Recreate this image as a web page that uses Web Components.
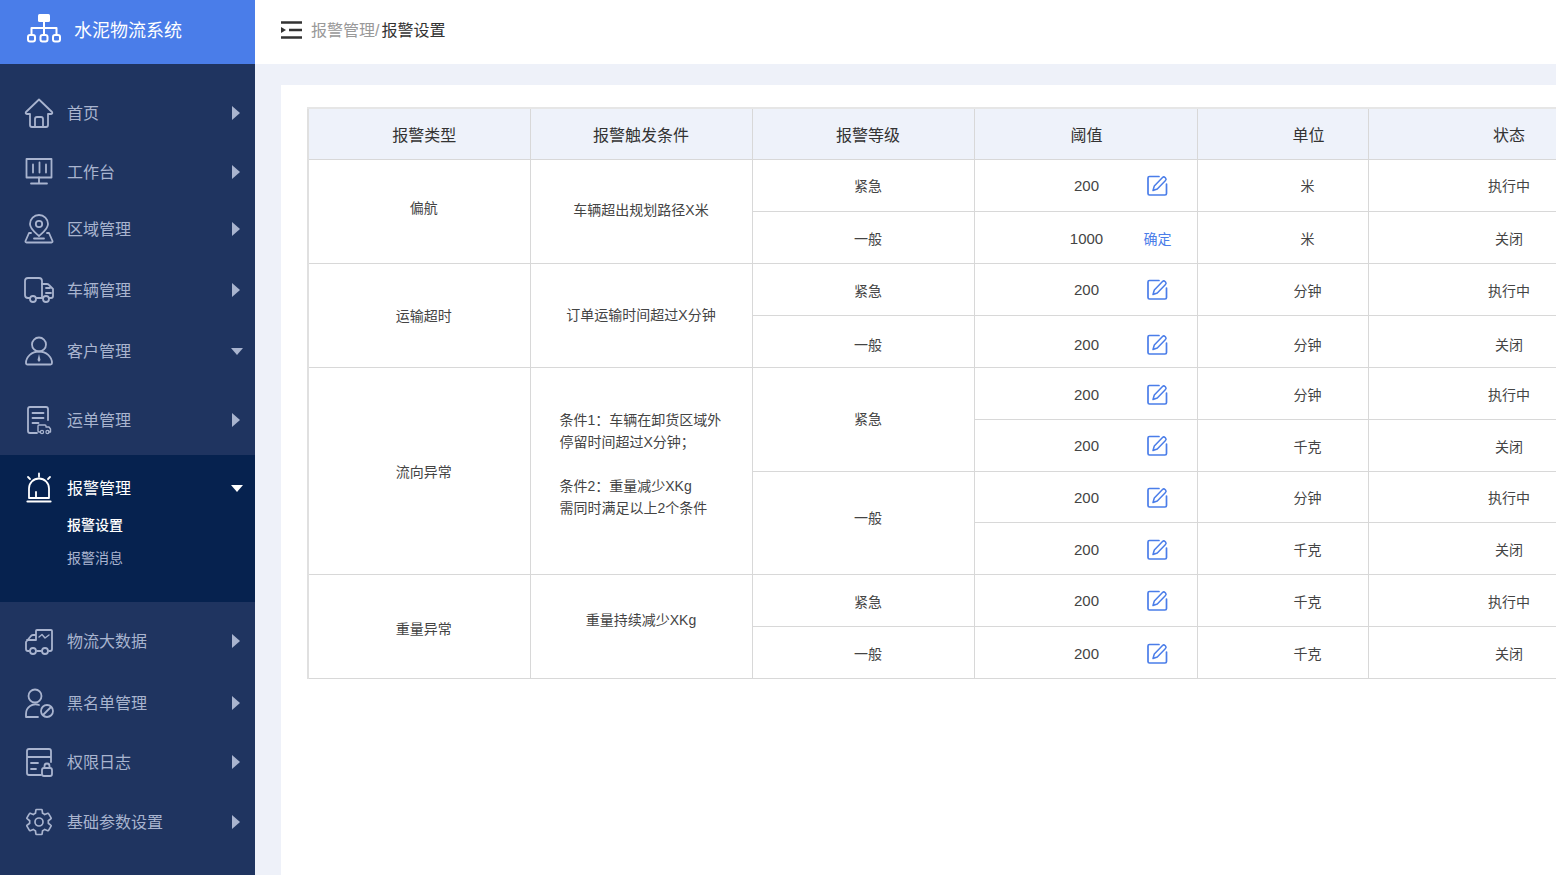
<!DOCTYPE html>
<html lang="zh">
<head>
<meta charset="utf-8">
<title>报警设置</title>
<style>
    html, body {
        margin: 0;
        height: 100%;
        overflow: hidden;
        font-family: "Liberation Sans", "Noto Sans CJK SC", sans-serif;
    }
</style>
</head>
<body>
<app-shell>
    <side-bar slot="side" title-text="水泥物流系统">
        <side-item icon="home" label="首页" h="58" top="20"></side-item>
        <side-item icon="monitor" label="工作台" h="60"></side-item>
        <side-item icon="pin" label="区域管理" h="54"></side-item>
        <side-item icon="truck" label="车辆管理" h="68"></side-item>
        <side-item icon="customer" label="客户管理" h="54" open></side-item>
        <side-item icon="waybill" label="运单管理" h="70" top="7"></side-item>
        <side-item icon="alarm" label="报警管理" h="66" open active>
            <sub-item active>报警设置</sub-item>
            <sub-item>报警消息</sub-item>
        </side-item>
        <side-item icon="data" label="物流大数据" h="78"></side-item>
        <side-item icon="black" label="黑名单管理" h="46"></side-item>
        <side-item icon="log" label="权限日志" h="72"></side-item>
        <side-item icon="gear" label="基础参数设置" h="48"></side-item>
    </side-bar>
    <top-bar slot="top" parent="报警管理" current="报警设置"></top-bar>
    <alarm-table></alarm-table>
</app-shell>

<script>
    const ICONS = {
        logo: '<rect x="11" y="0" width="12" height="8" rx="1.5" fill="currentColor" stroke="none"/><path d="M17 8v6M4.5 20v-6h25v6M17 14v6" stroke-width="2"/><rect x="1" y="21" width="7" height="6.5" rx="2" stroke-width="2"/><rect x="13.5" y="21" width="7" height="6.5" rx="2" stroke-width="2"/><rect x="26" y="21" width="7" height="6.5" rx="2" stroke-width="2"/>',
        home: '<path d="M15 1.5 2 14q-1 1.6 1 2h3v11q0 2 2 2h14q2 0 2-2V16h3q2-.4 1-2Z"/><path d="M11 29v-8q0-2 2-2h4q2 0 2 2v8"/>',
        monitor: '<rect x="2.500" y="2" width="25" height="18.500"/><path d="M9 7.500v8M15.500 5.500v10M22 7.500v8M15 20.500v5M7 26.500h16"/>',
        pin: '<path d="M15 1a9 9 0 0 1 9 9c0 5-5 8.500-9 12-4-3.500-9-7-9-12a9 9 0 0 1 9-9Z"/><circle cx="15" cy="10" r="3.200"/><path d="M7 19H5L1.500 27q-.3 1.500 1 1.500h25q1.300 0 1-1.500L25 19h-2M10 24.500h10"/>',
        truck: '<path d="M6 23H4q-3 0-3-3V6q0-3 3-3h11q3 0 3 3v17h-6"/><path d="M18 9h5q1.500 0 2.500 1.500L29 14v7q0 2-2 2h-2M18 23h1"/><circle cx="9" cy="24" r="3"/><circle cx="22" cy="24" r="3"/><path d="M22 13h4M22 18h5"/>',
        customer: '<circle cx="15" cy="8.500" r="7"/><path d="M2 27a13 11.500 0 0 1 26 0q0 1.500-1.500 1.500h-23Q2 28.500 2 27Z"/><path d="m15 18-1.500 6 1.500 2 1.500-2Z" fill="currentColor" stroke="none"/>',
        waybill: '<path d="M24 15V4q0-2-2-2H6Q4 2 4 4v22q0 2 2 2h7"/><path d="M8.500 8h11M8.500 13h11M8.500 18h6"/><g transform="translate(-2 -1)"><path d="M18 28h-1q-1 0-1-1v-5q0-1 1-1h6q1 0 1 1v1h3l1.500 2v3h-2" stroke-width="1.400"/><circle cx="20" cy="28" r="1.600" stroke-width="1.200"/><circle cx="25.500" cy="28" r="1.600" stroke-width="1.200"/></g>',
        alarm: '<path d="M5 25V15.500a10 10 0 0 1 20 0V25ZM12 25v-6M15 .5v3M4 4l2 2M26 4l-2 2"/><path d="M3.500 28.500h23" stroke-width="2.200"/>',
        data: '<path d="M12 9H9Q7.500 9 6.500 10.500L2 16v7q0 2 2 2h1M13 25h4M25 25h1q2 0 2-2V5q0-1-1-1H13q-1 0-1 1v9H3"/><path d="m15 11 3-2.500 3 3.500 4-3" stroke-width="1.400"/><circle cx="9" cy="25" r="3"/><circle cx="21" cy="25" r="3"/>',
        black: '<circle cx="11" cy="8" r="6.500"/><path d="M2 29v-3a9.500 9.500 0 0 1 13-9M2 29h12"/><circle cx="23" cy="23" r="6"/><path d="m19 27 8-8"/>',
        log: '<path d="M27 15V4q0-2-2-2H5Q3 2 3 4v22q0 2 2 2h12M3 10h24M7 16h7M7 22h5"/><rect x="18" y="21" width="10" height="8" rx="2"/><path d="M20.500 21v-2a2.500 2.500 0 0 1 5 0v2"/>',
        gear: '<g transform="scale(1.25)" stroke-width="1.350"><path d="M19.430 12.980c.04-.32.07-.64.07-.98s-.03-.66-.07-.98l2.110-1.650c.19-.15.24-.42.12-.64l-2-3.460c-.12-.22-.39-.3-.61-.22l-2.490 1c-.52-.4-1.080-.73-1.690-.98l-.38-2.650C14.460 2.180 14.250 2 14 2h-4c-.25 0-.46.18-.49.42l-.38 2.650c-.61.25-1.170.59-1.690.98l-2.490-1c-.23-.09-.49 0-.61.22l-2 3.460c-.13.22-.07.49.12.64l2.110 1.650c-.04.32-.07.65-.07.98s.03.66.07.98l-2.110 1.650c-.19.15-.24.42-.12.64l2 3.460c.12.22.39.3.61.22l2.490-1c.52.4 1.080.73 1.690.98l.38 2.650c.03.24.24.42.49.42h4c.25 0 .46-.18.49-.42l.38-2.650c.61-.25 1.170-.59 1.690-.98l2.490 1c.23.09.49 0 .61-.22l2-3.460c.12-.22.07-.49-.12-.64l-2.110-1.650z"/><circle cx="12" cy="12" r="3.200"/></g>',
        edit: '<path d="M12 1.500H2.500Q1 1.500 1 3v15.500Q1 20 2.500 20H18q1.500 0 1.500-1.500V9" stroke-width="1.700"/><path d="m6 15.500 1.300-4.500 8.200-8.500q1.300-1.200 2.500 0l.5.500q1.200 1.300 0 2.500l-8.200 8.500Z" stroke-width="1.500"/>',
        menu: '<path d="M0 1.500h21M8 9h13M0 16.500h21" stroke-width="2.400" stroke-linecap="butt"/><path d="M0 6l5 3-5 3Z" fill="currentColor" stroke="none"/>'
    };

    customElements.define('ui-icon', class extends HTMLElement {
        connectedCallback() {
            const size = this.getAttribute('size') || 30;
            const box = this.getAttribute('box') || '0 0 30 30';
            const sw = this.getAttribute('sw') || 1.8;
            this.attachShadow({ mode: 'open' }).innerHTML = `
                <style>:host { display: block; width: ${size}px; height: ${size}px; } svg { display: block; overflow: visible; }</style>
                <svg width="${size}" height="${size}" viewBox="${box}" fill="none" stroke="currentColor" stroke-width="${sw}" stroke-linecap="round" stroke-linejoin="round">${ICONS[this.getAttribute('name')]}</svg>`;
        }
    });

    customElements.define('app-shell', class extends HTMLElement {
        constructor() {
            super();
            this.attachShadow({ mode: 'open' }).innerHTML = `
                <style>
                    :host { display: grid; grid-template-columns: 255px 1fr; height: 875px; width: 1556px; overflow: hidden; background: #eef1f9; }
                    .right { display: flex; flex-direction: column; min-width: 0; overflow: hidden; }
                    .card { flex: 1; margin: 21px 0 0 26px; padding: 22px 0 0 26px; background: #fff; overflow: hidden; }
                </style>
                <slot name="side"></slot>
                <div class="right">
                    <slot name="top"></slot>
                    <div class="card"><slot></slot></div>
                </div>`;
        }
    });

    customElements.define('side-bar', class extends HTMLElement {
        connectedCallback() {
            this.attachShadow({ mode: 'open' }).innerHTML = `
                <style>
                    :host { display: flex; flex-direction: column; background: #1f3460; height: 875px; overflow: hidden; }
                    .brand { height: 58px; padding-bottom: 6px; flex: none; display: flex; align-items: center; gap: 13px; padding-left: 27px; background: #4a7de9; color: #fff; font-size: 18px; }
                    ui-icon { margin-top: 4px; }
                </style>
                <div class="brand"><ui-icon name="logo" size="34" box="0 0 34 34" sw="2"></ui-icon><span>${this.getAttribute('title-text')}</span></div>
                <slot></slot>`;
        }
    });

    customElements.define('side-item', class extends HTMLElement {
        connectedCallback() {
            const open = this.hasAttribute('open');
            this.attachShadow({ mode: 'open' }).innerHTML = `
                <style>
                    :host { display: block; flex: none; color: #a9b4cf; font-size: 16px; margin-top: ${this.getAttribute('top') || 0}px; }
                    :host([active]) { color: #fff; background: #06224f; height: 147px; }
                    :host([active]) .subs { margin-top: -12px; }
                    .row { height: ${this.getAttribute('h')}px; display: flex; align-items: center; padding: 0 12px 0 24px; }
                    .row span { margin-left: 13px; flex: 1; padding-bottom: 2px; }
                    .arrow { width: 0; height: 0; border-style: solid; border-color: transparent; margin-right: 3px; border-width: 7px 0 7px 8px; border-left-color: currentColor; }
                    .arrow.open { margin-right: 0; border-width: 7px 6.500px 0; border-color: currentColor transparent transparent; }
                </style>
                <div class="row">
                    <ui-icon name="${this.getAttribute('icon')}"></ui-icon>
                    <span>${this.getAttribute('label')}</span>
                    <i class="arrow${open ? ' open' : ''}"></i>
                </div>
                <div class="subs"><slot></slot></div>`;
        }
    });

    customElements.define('sub-item', class extends HTMLElement {
        constructor() {
            super();
            this.attachShadow({ mode: 'open' }).innerHTML = `
                <style>
                    :host { display: block; height: 33px; line-height: 33px; padding-left: 67px; font-size: 14px; color: #a9b4cf; }
                    :host([active]) { color: #fff; font-weight: 500; }
                </style>
                <slot></slot>`;
        }
    });

    customElements.define('top-bar', class extends HTMLElement {
        connectedCallback() {
            this.attachShadow({ mode: 'open' }).innerHTML = `
                <style>
                    :host { display: flex; flex: none; align-items: center; height: 58px; padding-bottom: 6px; background: #fff; padding-left: 26px; font-size: 16px; color: #999; }
                    ui-icon { color: #333; margin-right: 9px; margin-top: 5px; }
                    b { font-weight: 400; color: #333; margin-left: 2px; }
                </style>
                <ui-icon name="menu" size="21" box="0 0 21 21"></ui-icon>
                <span>${this.getAttribute('parent')}/<b>${this.getAttribute('current')}</b></span>`;
        }
    });

    // row heights and text offsets read off the reference, which is not quite regular
    const ROW_H = [52, 52, 52, 52, 52, 52, 51, 52, 52, 52];
    const ROW_DY = [0, 1, 0.5, 3, 1, 0.5, 0.5, 1, 0.5, 1];
    const ROWS = [
        { type: ['偏航', 2, -4], cond: ['车辆超出规划路径X米', 2, -2], level: ['紧急'], val: 200, unit: '米', state: '执行中' },
        { level: ['一般'], val: 1000, unit: '米', state: '关闭', confirm: true },
        { type: ['运输超时', 2], cond: ['订单运输时间超过X分钟', 2, -1], level: ['紧急'], val: 200, unit: '分钟', state: '执行中' },
        { level: ['一般'], val: 200, unit: '分钟', state: '关闭' },
        { type: ['流向异常', 4], cond: ['条件1：车辆在卸货区域外<br>停留时间超过X分钟；<br><br>条件2：重量减少XKg<br>需同时满足以上2个条件', 4, -7], level: ['紧急', 2, -1], val: 200, unit: '分钟', state: '执行中' },
        { val: 200, unit: '千克', state: '关闭' },
        { level: ['一般', 2, -6], val: 200, unit: '分钟', state: '执行中' },
        { val: 200, unit: '千克', state: '关闭' },
        { type: ['重量异常', 2, 2], cond: ['重量持续减少XKg', 2, -7], level: ['紧急'], val: 200, unit: '千克', state: '执行中' },
        { level: ['一般'], val: 200, unit: '千克', state: '关闭' }
    ];

    customElements.define('alarm-table', class extends HTMLElement {
        connectedCallback() {
            // a merged cell moves by its own offset, a single one by the row's
            const cell = (c, cls, dy) => {
                if (!c) return '';
                const d = c[1] > 1 ? (c[2] || 0) : dy;
                const pad = d ? ` style="--dt:${Math.max(d, 0) * 2}px;--db:${Math.max(-d, 0) * 2}px"` : '';
                return `<td rowspan="${c[1] || 1}" class="${cls}"${pad}>${c[0]}</td>`;
            };
            const body = ROWS.map((r, i) => {
                const dy = ROW_DY[i];
                return `
                <tr style="height:${ROW_H[i]}px">
                    ${cell(r.type, 'c-type', dy)}
                    ${cell(r.cond, r.cond && r.cond[1] === 4 ? 'cond' : '', dy)}
                    ${cell(r.level, 'c-level', dy)}
                    ${cell([`<div class="val"><span></span><span class="num">${r.val}</span>${r.confirm
                        ? '<a>确定</a>'
                        : '<ui-icon name="edit" size="21" box="0 0 21 21"></ui-icon>'}</div>`], '', dy)}
                    ${cell([r.unit], 'c-unit', dy)}
                    ${cell([r.state], '', dy)}
                </tr>`;
            }).join('');
            this.attachShadow({ mode: 'open' }).innerHTML = `
                <style>
                    :host { display: block; width: 1342px; font-size: 14px; color: #444; }
                    table { border-collapse: collapse; table-layout: fixed; width: 1342px; border-top: 2px solid #e6e6e6; border-left: 2px solid #e0e0e0; }
                    td, th { border: 1px solid #d8d8d8; text-align: center; padding: var(--dt, 0) 0 var(--db, 0); box-sizing: border-box; }
                    th { height: 51px; background: #eef2fa; font-weight: 400; font-size: 16px; color: #333; }
                    .c-type { padding-left: 9px; }
                    .c-level { padding-left: 10px; }
                    .c-unit { padding-left: 50px; }
                    th.c-type { padding-left: 10px; }
                    th.c-unit { padding-left: 52px; }
                    th.mid { padding-left: 2px; }
                    .cond { text-align: left; padding-left: 29px; line-height: 22px; }
                    .num { font-size: 15px; margin-left: 2px; }
                    .val { display: grid; grid-template-columns: 1fr auto 1fr; align-items: center; }
                    .val > :last-child { justify-self: end; margin-right: 29px; }
                    a { color: #4a7de9; margin-right: 25px !important; }
                    ui-icon { color: #4a7de9; }
                </style>
                <table>
                    <colgroup><col style="width:222px"><col style="width:222px"><col style="width:222px"><col style="width:223px"><col style="width:171px"><col style="width:282px"></colgroup>
                    <tr><th class="c-type">报警类型</th><th>报警触发条件</th><th class="c-level">报警等级</th><th class="mid">阈值</th><th class="c-unit">单位</th><th>状态</th></tr>
                    ${body}
                </table>`;
        }
    });
</script>
</body>
</html>
